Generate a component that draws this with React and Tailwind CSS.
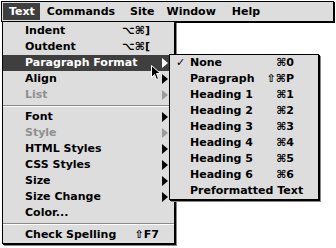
import React from 'react'

const font = { fontFamily: '"DejaVu Sans", "Liberation Sans", sans-serif' }

const mainItems = [
  { label: 'Indent', sc: '⌥⌘]', pr: 'mr-[24px]' },
  { label: 'Outdent', sc: '⌥⌘[', pr: 'mr-[24px]' },
  { label: 'Paragraph Format', sub: true, active: true },
  { label: 'Align', sub: true },
  { label: 'List', sub: true, disabled: true },
  { sep: true },
  { label: 'Font', sub: true },
  { label: 'Style', sub: true, disabled: true },
  { label: 'HTML Styles', sub: true },
  { label: 'CSS Styles', sub: true },
  { label: 'Size', sub: true },
  { label: 'Size Change', sub: true },
  { label: 'Color...' },
  { sep: true },
  { label: 'Check Spelling', sc: '⇧F7', pr: 'mr-[15px]' },
]

const subItems = [
  { label: 'None', sc: '⌘0', checked: true },
  { label: 'Paragraph', sc: '⇧⌘P' },
  { label: 'Heading 1', sc: '⌘1' },
  { label: 'Heading 2', sc: '⌘2' },
  { label: 'Heading 3', sc: '⌘3' },
  { label: 'Heading 4', sc: '⌘4' },
  { label: 'Heading 5', sc: '⌘5' },
  { label: 'Heading 6', sc: '⌘6' },
  { label: 'Preformatted Text' },
]

function Triangle({ color }) {
  return (
    <svg width="6" height="10" viewBox="0 0 6 10" className="mr-[6px] shrink-0">
      <polygon points="0,0 6,5 0,10" fill={color} />
    </svg>
  )
}

function Separator() {
  return (
    <div className="h-[6px] flex flex-col justify-center">
      <div className="h-px bg-[#8a8a8a]" />
      <div className="h-px bg-white" />
    </div>
  )
}

export default function App() {
  return (
    <div className="relative w-[336px] h-[248px] bg-white overflow-hidden text-[11px] font-bold" style={font}>
      {/* Menu bar */}
      <div className="p-[1px]">
        <div className="h-[21px] w-[333px] bg-[#dddddd] border border-black shadow-[1px_1px_0_#000] flex items-stretch pt-[1px] pb-[1px] pl-[1px]">
          <div className="bg-[#3f3f3f] text-white pl-[6px] pr-[5px] flex items-center leading-none">Text</div>
          <div className="ml-[1px] px-[6px] flex items-center leading-none">Commands</div>
          <div className="ml-[3px] px-[6px] flex items-center leading-none">Site</div>
          <div className="px-[6px] flex items-center leading-none">Window</div>
          <div className="ml-[4px] px-[6px] flex items-center leading-none">Help</div>
        </div>
      </div>

      {/* Text menu */}
      <div className="absolute left-[2px] top-[21px] w-[173px] bg-[#dddddd] border border-black shadow-[1px_1px_0_#000,2px_2px_0_#888] pt-[1px]">
        {mainItems.map((it, i) =>
          it.sep ? (
            <Separator key={i} />
          ) : (
            <div
              key={i}
              className={`h-[16px] flex items-center pl-[22px] leading-[16px] ${
                it.active ? 'bg-[#3f3f3f] text-white' : it.disabled ? 'text-[#8f8f8f]' : 'text-black'
              }`}
            >
              <span className="flex-1 whitespace-nowrap">{it.label}</span>
              {it.sc && <span className={`whitespace-nowrap ${it.pr}`}>{it.sc}</span>}
              {it.sub && <Triangle color={it.active ? '#fff' : it.disabled ? '#9a9a9a' : '#000'} />}
            </div>
          )
        )}
      </div>

      {/* Paragraph Format submenu */}
      <div className="absolute left-[169px] top-[54px] w-[150px] bg-[#dddddd] border border-black shadow-[1px_1px_0_#000,2px_2px_0_#888]">
        {subItems.map((it) => (
          <div key={it.label} className="h-[16px] flex items-center leading-[16px] text-black">
            <span className="w-[20px] pl-[6px] shrink-0 font-normal">{it.checked ? '✓' : ''}</span>
            <span className="flex-1 whitespace-nowrap">{it.label}</span>
            {it.sc && <span className="mr-[24px] whitespace-nowrap">{it.sc}</span>}
          </div>
        ))}
      </div>

      {/* Mouse pointer */}
      <svg width="12" height="17" viewBox="0 0 12 17" className="absolute left-[150px] top-[64px]">
        <path d="M1.5 1.5 L1.5 13.5 L4.5 10.5 L6.5 15.5 L8.5 14.5 L6.5 9.5 L10.5 9.5 Z" fill="#000" stroke="#fff" strokeWidth="1" />
      </svg>
    </div>
  )
}
